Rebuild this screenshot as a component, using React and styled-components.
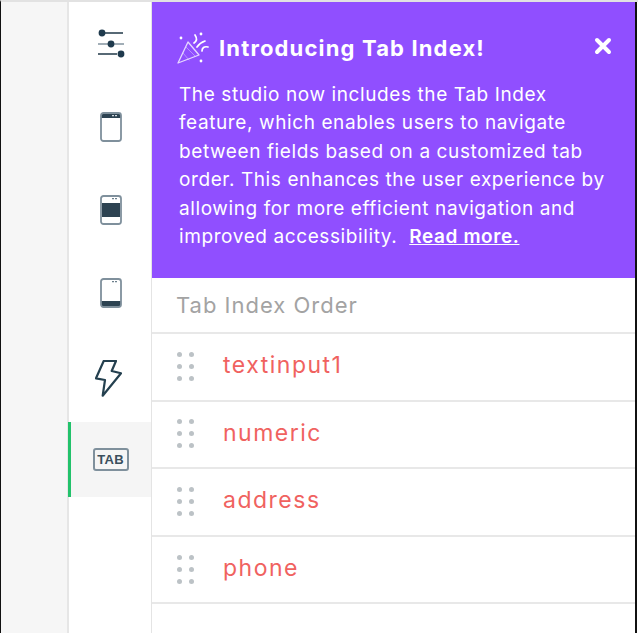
import React from "react";
import styled, { createGlobalStyle } from "styled-components";

const fields = ["textinput1", "numeric", "address", "phone"];

const GlobalStyle = createGlobalStyle`
  html, body {
    margin: 0;
    padding: 0;
    background: #fff;
  }
  * {
    box-sizing: border-box;
  }
`;

const SlidersIcon = () => (
  <svg width="28" height="30" viewBox="0 0 28 30" fill="none">
    <path d="M7 4h19" stroke="#2d4352" strokeWidth="1.6" />
    <path d="M1 15h26" stroke="#8b9aa5" strokeWidth="1.6" />
    <path d="M1 25h19" stroke="#2d4352" strokeWidth="1.6" />
    <circle cx="5" cy="4" r="3.4" fill="#1f3a4d" />
    <circle cx="14" cy="15" r="3.4" fill="#1f3a4d" />
    <circle cx="24" cy="25" r="3.4" fill="#1f3a4d" />
  </svg>
);

const DeviceIcon = ({ band }) => (
  <svg width="22" height="30" viewBox="0 0 22 30" fill="none">
    {band === "top" && <path d="M3 1h16a2 2 0 0 1 2 2v3H1V3a2 2 0 0 1 2-2z" fill="#2d4352" />}
    {band === "middle" && <rect x="2" y="8" width="18" height="14" fill="#2d4352" />}
    {band === "bottom" && <path d="M1 23h20v4a2 2 0 0 1-2 2H3a2 2 0 0 1-2-2z" fill="#2d4352" />}
    <rect x="1" y="1" width="20" height="28" rx="2.5" stroke="#7f909c" strokeWidth="1.8" />
    <path d="M12 3.6h6" stroke={band === "top" ? "#d5dce1" : "#6d808d"} strokeWidth="1.2" strokeDasharray="2 1" />
  </svg>
);

const BoltIcon = () => (
  <svg width="27" height="37" viewBox="0 0 27 37" fill="none">
    <path
      d="M8.7 1H21l-4.3 10 9.3 2.3L7.7 35.7 10 20l-9-1.7z"
      stroke="#24404f"
      strokeWidth="2.2"
      strokeLinejoin="round"
    />
  </svg>
);

const PartyIcon = () => (
  <svg width="34" height="36" viewBox="0 0 34 36" fill="none" stroke="#e6d8ff" strokeLinecap="round">
    <path d="M11 12L1 33l21-8z" strokeWidth="1.3" strokeLinejoin="round" />
    <path d="M6 23l6 7M9 17l9 9" strokeWidth="0.8" opacity="0.6" />
    <path d="M17 13c3-2 3-5 1-8" strokeWidth="1.7" stroke="#fff" />
    <path d="M20 17c2-3 5-5 8-6" strokeWidth="1.7" stroke="#fff" />
    <path d="M25 21c0-3 2-5 6-4" strokeWidth="1.7" stroke="#fff" />
    <circle cx="4" cy="8" r="1.4" fill="#fff" stroke="none" />
    <circle cx="24" cy="4" r="1.4" fill="#fff" stroke="none" />
    <circle cx="24" cy="31" r="1.4" fill="#fff" stroke="none" />
  </svg>
);

const CloseIcon = () => (
  <svg width="18" height="18" viewBox="0 0 18 18" fill="none">
    <path d="M3 3l12 12M15 3L3 15" stroke="#fff" strokeWidth="4" strokeLinecap="round" />
  </svg>
);

const App = () => {
  return (
    <>
      <GlobalStyle />
      <Page>
        <Gutter />
        <Rail>
          <RailItem $height={83}><SlidersIcon /></RailItem>
          <RailItem $height={83}><DeviceIcon band="top" /></RailItem>
          <RailItem $height={83}><DeviceIcon band="middle" /></RailItem>
          <RailItem $height={84}><DeviceIcon band="bottom" /></RailItem>
          <RailItem $height={87} $nudge={6}><BoltIcon /></RailItem>
          <RailItem $height={75} $active><TabBadge>TAB</TabBadge></RailItem>
        </Rail>
        <Panel>
          <Banner>
            <BannerHead>
              <PartyIcon />
              <BannerTitle>Introducing Tab Index!</BannerTitle>
              <CloseButton><CloseIcon /></CloseButton>
            </BannerHead>
            <BannerText>
              The studio now includes the Tab Index<br />
              feature, which enables users to navigate<br />
              between fields based on a customized tab<br />
              order. This enhances the user experience by<br />
              allowing for more efficient navigation and<br />
              improved accessibility. &nbsp;<ReadMore>Read more.</ReadMore>
            </BannerText>
          </Banner>
          <ListTitle>Tab Index Order</ListTitle>
          {fields.map((field) => (
            <FieldRow key={field}>
              <Grip>
                {Array.from({ length: 6 }).map((_, i) => (
                  <GripDot key={i} />
                ))}
              </Grip>
              <FieldName>{field}</FieldName>
            </FieldRow>
          ))}
        </Panel>
      </Page>
    </>
  );
};

const Page = styled.div`
  display: flex;
  width: 638px;
  height: 633px;
  overflow: hidden;
  padding-right: 1px;
  border-top: 2px solid #e2e2e2;
  border-left: 1px solid #111;
  font-family: Inter, "Open Sans", sans-serif;
`;

const Gutter = styled.div`
  width: 66px;
  flex: none;
  background: #f6f6f6;
`;

const Rail = styled.nav`
  width: 85px;
  flex: none;
  background: #fff;
  border-left: 2px solid #e6e6e6;
  border-right: 1px solid #e4e4e4;
`;

const RailItem = styled.div`
  display: flex;
  align-items: center;
  justify-content: center;
  height: ${(p) => p.$height}px;
  margin-left: -1px;
  padding-right: ${(p) => p.$nudge || 0}px;
  background: ${(p) => (p.$active ? "#f5f5f5" : "transparent")};
  border-left: 3px solid ${(p) => (p.$active ? "#22c26b" : "transparent")};
`;

const TabBadge = styled.span`
  display: flex;
  align-items: center;
  justify-content: center;
  width: 36px;
  height: 23px;
  margin-left: -1px;
  border: 2px solid #7f909c;
  border-radius: 3px;
  color: #3a4f5d;
  font-family: "Liberation Sans", sans-serif;
  font-size: 13px;
  font-weight: 700;
  letter-spacing: 0.3px;
`;

const Panel = styled.main`
  flex: 1;
  min-width: 0;
  display: flex;
  flex-direction: column;
  background: #fff;
  border-right: 2px solid #111;
`;

const Banner = styled.section`
  height: 276px;
  padding: 28px 23px 0 25px;
  background: #904fff;
  color: #fff;
`;

const BannerHead = styled.header`
  display: flex;
  align-items: center;
  gap: 8px;
  height: 36px;
`;

const BannerTitle = styled.h2`
  margin: 0;
  flex: 1;
  font-size: 22px;
  font-weight: 700;
  letter-spacing: 1.15px;
  white-space: nowrap;
`;

const CloseButton = styled.span`
  display: flex;
  margin-top: -4px;
`;

const BannerText = styled.p`
  margin: 15px 0 0 2px;
  font-size: 19px;
  line-height: 28.4px;
  letter-spacing: 0.6px;
  white-space: nowrap;
`;

const ReadMore = styled.a`
  color: #fff;
  font-weight: 600;
  text-decoration: underline;
`;

const ListTitle = styled.div`
  height: 56px;
  display: flex;
  align-items: center;
  padding-left: 24px;
  border-bottom: 2px solid #e8e8e8;
  color: #a3a3a3;
  font-size: 22px;
  letter-spacing: 1px;
`;

const FieldRow = styled.div`
  height: 67.6px;
  display: flex;
  align-items: center;
  padding-left: 25px;
  border-bottom: 2px solid #e8e8e8;
`;

const Grip = styled.div`
  display: grid;
  grid-template-columns: 5px 5px;
  gap: 7px;
  margin-top: -1px;
`;

const GripDot = styled.i`
  width: 5px;
  height: 5px;
  border-radius: 50%;
  background: #bcc2c6;
`;

const FieldName = styled.span`
  margin-left: 29px;
  margin-top: -3px;
  color: #f0625f;
  font-size: 23px;
  letter-spacing: 1.5px;
`;

export default App;
